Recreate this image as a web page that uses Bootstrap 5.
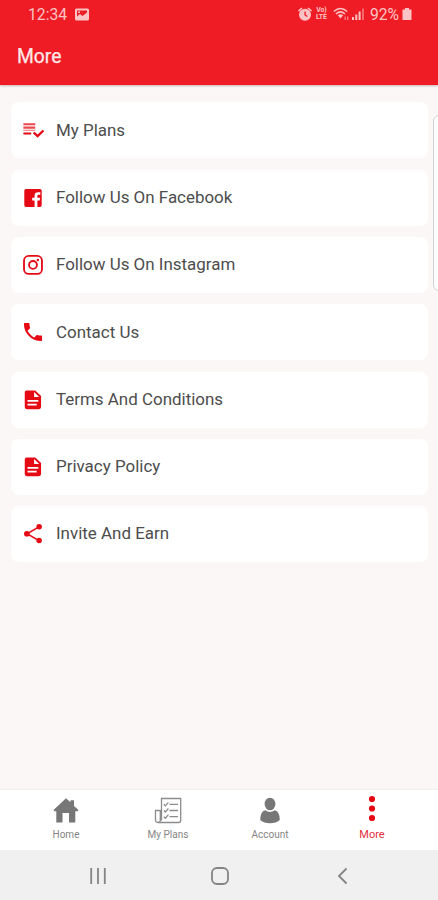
<!DOCTYPE html>
<html lang="en">
<head>
<meta charset="utf-8">
<meta name="viewport" content="width=device-width, initial-scale=1">
<title>More</title>
<link rel="stylesheet" href="https://cdn.jsdelivr.net/npm/bootstrap@5.3.0/dist/css/bootstrap.min.css">
<style>
body{font-family:Roboto,sans-serif;background:#faf7f6;height:900px;overflow:hidden}
svg{display:block;flex:none}
.app-top{background:#ef1c25;height:85px;box-shadow:0 1px 2px rgba(120,60,50,.35);color:#fff}
.status{height:29px;padding:0 26px 0 28px;font-size:15.7px;color:#fbc3c4}
.status svg{fill:#fbc3c4}
.volte{font-size:7px;line-height:7px;font-weight:700;width:15px;margin-left:2px;letter-spacing:-.2px}
.volte span{display:block}
.battery-label{margin-left:5px;margin-right:3px}
.app-title{font-size:19.3px;line-height:24px;padding:16px 0 0 17px;color:#ffe9e9;font-weight:400;-webkit-text-stroke:.25px #ffe9e9}
.menu{padding:17.400px 10px 0 11px;gap:11.3px}
.menu .list-group-item{height:56px;border:0;border-radius:8px;padding:0 0 0 11px;gap:12px;color:#4d4d4d;font-size:16.95px;background:#fff}
.menu svg{fill:#e60a14}
.edge-panel{position:absolute;left:433px;top:115px;width:12px;height:176px;border:1px solid #d2d2d2;border-radius:7px;background:#fff}
.tabs{height:61px;background:#fff;padding:0 15px;border-top:1px solid #f2efee}
.tabs a{width:102px;padding-top:5px;font-size:10px;line-height:12px;color:#858585;text-decoration:none}
.tabs a svg{fill:#777;margin-bottom:4px}
.tabs a.active{color:#e2303c}
.tabs a.active svg{fill:#e60a14}
.more-label{font-size:11px}
.sysbar{height:50px;background:#f0f0f0;padding:2px 36px 0 37px}
.sysbar span{width:123px}
.sysbar svg{fill:none;stroke:#848484;stroke-width:1.8}
</style>
<script src="https://cdn.jsdelivr.net/npm/bootstrap@5.3.0/dist/js/bootstrap.bundle.min.js"></script>
</head>
<body class="d-flex flex-column position-relative">
<header class="app-top">
  <div class="status d-flex align-items-center">
    <span>12:34</span>
    <svg class="ms-2" width="14" height="14" viewBox="0 0 14 14"><path fill-rule="evenodd" d="M1.500.500h11Q14 .5 14 2v9Q14 12.500 12.500 12.500h-11Q0 12.500 0 11V2Q0 .5 1.500.500zM2 2.500v6l3-2.500 2.500 2L12 4.500v-2zM3 3.500h2V5H3z"/></svg>
    <div class="d-flex align-items-center ms-auto">
      <svg width="14" height="14" viewBox="0 0 14 14"><path d="M0 3.500 3.500.5l1 1L1 4.700zM14 3.500 10.500.5l-1 1L13 4.700z"/><path fill-rule="evenodd" d="M7 1.800a6 6 0 1 1 0 12 6 6 0 0 1 0-12zM6.400 4.500v3.800l2.700 1.700.7-1-2-1.300V4.500z"/></svg>
      <div class="volte text-center"><span>Vo)</span><span>LTE</span></div>
      <svg class="ms-1" width="19" height="14" viewBox="0 0 19 14"><g fill="none" stroke="#fbc3c4" stroke-width="1.600"><path d="M.8 4.500Q7.500-1.500 14.200 4.500M3 7Q7.500 2.800 12 7"/></g><path d="M4.800 8.300Q7.500 6 10.200 8.300L7.500 11.500z"/><path d="M11.500 9.500h1.300V13h-1.300zM14 9.500h1.300V13H14z" opacity=".6"/></svg>
      <svg width="13" height="14" viewBox="0 0 13 14"><path d="M0 10h2v3H0zM3.300 7.500h2V13h-2zM6.600 4.500h2V13h-2z"/><path opacity=".45" d="M10 1.500h2V13h-2z"/></svg>
      <span class="battery-label">92%</span>
      <svg width="10" height="14" viewBox="0 0 10 14"><path d="M3 1h4v1.500h2.500V13H.5V2.500H3z"/></svg>
    </div>
  </div>
  <h1 class="app-title mb-0">More</h1>
</header>

<main class="flex-grow-1">
  <div class="menu list-group">
    <a class="list-group-item d-flex align-items-center"><svg width="22" height="22" viewBox="0 0 24 24"><path d="M1.500 4.500h13v2.200h-13zM1.500 8.300h13v2.200h-13z" opacity=".75"/><path d="M1.500 11.700h13v1.300h-13z" opacity=".5"/><path d="M1.500 14.600h8.500v2.200H1.500zM22.500 11.600l1.800 1.800-7.300 7-5.200-4.800 1.800-1.800 3.400 3.100z"/></svg><span>My Plans</span></a>
    <a class="list-group-item d-flex align-items-center"><svg width="22" height="22" viewBox="0 0 24 24"><path d="M4.500 2.300h15q2 0 2 2v15.400q0 2-2 2h-2.700v-7h2.500l.4-3h-2.900V9.800q0-1.300 1.400-1.300h1.800V5.700h-2.600q-3.700 0-3.700 3.700v2.300h-2.600v3h2.600v7H4.500q-2 0-2-2V4.300q0-2 2-2z"/></svg><span>Follow Us On Facebook</span></a>
    <a class="list-group-item d-flex align-items-center"><svg width="22" height="22" viewBox="0 0 24 24"><g fill="none" stroke="#e60a14" stroke-width="2"><rect x="2.200" y="2.100" width="19.600" height="19.600" rx="5.200"/><circle cx="12" cy="11.900" r="4.300"/></g><circle cx="17.300" cy="6.600" r="1.300"/></svg><span>Follow Us On Instagram</span></a>
    <a class="list-group-item d-flex align-items-center"><svg width="22" height="22" viewBox="0 0 24 24"><path transform="translate(-1.200 -1.200) scale(1.100)" d="M6.620 10.790c1.440 2.830 3.760 5.140 6.590 6.590l2.200-2.200c.27-.27.67-.36 1.020-.24 1.120.37 2.330.57 3.570.57.550 0 1 .450 1 1V20c0 .550-.450 1-1 1-9.390 0-17-7.610-17-17 0-.550.450-1 1-1h3.500c.550 0 1 .450 1 1 0 1.250.200 2.450.570 3.570.110.350.030.740-.250 1.020z"/></svg><span>Contact Us</span></a>
    <a class="list-group-item d-flex align-items-center"><svg width="22" height="22" viewBox="0 0 24 24"><path fill-rule="evenodd" d="M5 1.500h9.500l6.300 6v12.200q0 2.300-2.300 2.300H5.300Q3 22 3 19.700V3.800Q3 1.500 5 1.500zM13.200 3.300v5.500h5.600zM6 12v1.900h11.800V12zM6 16v1.900h10V16z"/></svg><span>Terms And Conditions</span></a>
    <a class="list-group-item d-flex align-items-center"><svg width="22" height="22" viewBox="0 0 24 24"><path fill-rule="evenodd" d="M5 1.500h9.500l6.300 6v12.200q0 2.300-2.300 2.300H5.300Q3 22 3 19.700V3.800Q3 1.500 5 1.500zM13.200 3.300v5.500h5.600zM6 12v1.900h11.800V12zM6 16v1.900h10V16z"/></svg><span>Privacy Policy</span></a>
    <a class="list-group-item d-flex align-items-center"><svg width="22" height="22" viewBox="0 0 24 24"><path d="M18.500 4.200 5.500 11.700l13 7.500" fill="none" stroke="#e60a14" stroke-width="1.700"/><circle cx="18.700" cy="4.200" r="3"/><circle cx="5.300" cy="11.700" r="3.100"/><circle cx="18.700" cy="19.200" r="3"/></svg><span>Invite And Earn</span></a>
  </div>
</main>
<div class="edge-panel"></div>

<nav class="tabs d-flex">
  <a class="d-flex flex-column align-items-center"><svg width="28" height="30" viewBox="0 0 28 30"><path d="M1.500 15 14 3.300l4.500 4V5.200H22V11l4.500 4-1 1.200h-2.200V27.500H17V18h-6.500v9.500H4.300V16.200H2.500z"/></svg>Home</a>
  <a class="d-flex flex-column align-items-center"><svg width="28" height="30" viewBox="0 0 28 30"><g fill="none" stroke="#8c8c8c" stroke-width="1.300"><path d="M7.500 25.500V3.500h19.200v21.800q0 2.200-2.200 2.200H4Q1.500 27.500 1.500 25V15.500h4.800V25q0 2.500-2.200 2.500M15.500 9.300h8.500M15.500 15.500h8.500M15.500 21.700h8.500"/><path d="m9.800 9.300 1.600 1.500 3-3.500M9.800 15.500l1.600 1.500 3-3.500M9.800 21.700l1.600 1.500 3-3.500"/></g></svg>My Plans</a>
  <a class="d-flex flex-column align-items-center"><svg width="28" height="30" viewBox="0 0 28 30"><ellipse cx="14" cy="9" rx="5.400" ry="6.300"/><path d="M9.200 15.300Q14 18.500 18.800 15.300 23.600 16.200 23.800 25 20 28.300 14 28.300T4.200 25Q4.400 16.200 9.200 15.300z"/></svg>Account</a>
  <a class="active d-flex flex-column align-items-center"><svg width="28" height="30" viewBox="0 0 28 30"><circle cx="14" cy="4" r="3.100"/><circle cx="14" cy="13.500" r="3.100"/><circle cx="14" cy="23" r="3.100"/></svg><span class="more-label">More</span></a>
</nav>
<footer class="sysbar d-flex align-items-center">
  <span class="d-flex justify-content-center"><svg width="20" height="20" viewBox="0 0 20 20"><path d="M3.200 2v16M10 2v16M16.800 2v16"/></svg></span>
  <span class="d-flex justify-content-center"><svg width="20" height="20" viewBox="0 0 20 20"><rect x="2" y="2" width="16" height="16" rx="5"/></svg></span>
  <span class="d-flex justify-content-center"><svg width="20" height="20" viewBox="0 0 20 20"><path d="M15.500 2.500 8 10l7.500 7.500"/></svg></span>
</footer>
</body>
</html>
